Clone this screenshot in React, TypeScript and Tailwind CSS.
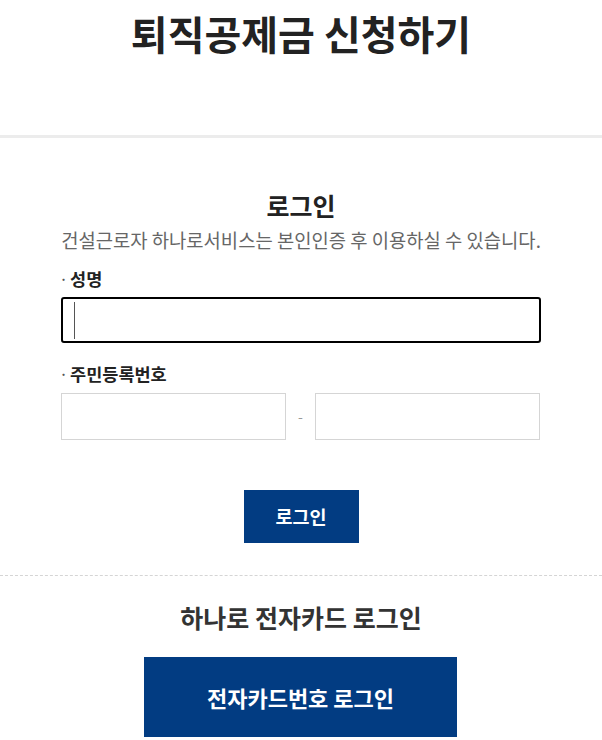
const App = () => {
  return (
    <div
      className="min-h-[740px] bg-white text-[#222]"
      style={{ fontFamily: '"Noto Sans CJK KR", "Noto Sans", sans-serif' }}
    >
      <div className="h-[138px] border-b-[3px] border-[#ececec] pt-[5px]">
        <h1 className="text-center text-[40px] font-bold leading-[56px] text-[#222]">
          퇴직공제금 신청하기
        </h1>
      </div>

      <div className="mx-auto w-[480px] pt-[50px]">
        <h2 className="text-center text-[25px] font-bold leading-[34px]">로그인</h2>
        <p className="mt-[5px] text-center text-[18.8px] leading-[26px] text-[#666]">
          건설근로자 하나로서비스는 본인인증 후 이용하실 수 있습니다.
        </p>

        <label className="mt-[14px] flex items-center text-[17.5px] font-bold leading-[24px]">
          <span className="-ml-[1px] mr-[3px] text-[12px] text-[#555]">·</span>성명
        </label>
        {/* focused field with caret */}
        <div className="relative mt-[6px]">
          <input
            type="text"
            className="block h-[46px] w-full rounded-[3px] border-2 border-black px-3 outline-none"
          />
          <span className="absolute left-[13px] top-[5px] h-[37px] w-px bg-[#555]" />
        </div>

        <label className="mt-[19px] flex items-center text-[17.5px] font-bold leading-[24px]">
          <span className="-ml-[1px] mr-[3px] text-[12px] text-[#555]">·</span>주민등록번호
        </label>
        <div className="mt-[7px] flex items-center pr-[1px]">
          <input
            type="text"
            className="block h-[47px] w-[225px] border border-[#d5d5d5] px-3 outline-none"
          />
          <span className="flex-1 text-center text-[14px] text-[#999]">-</span>
          <input
            type="text"
            className="block h-[47px] w-[225px] border border-[#d5d5d5] px-3 outline-none"
          />
        </div>

        <div className="mt-[50px] flex justify-center">
          <button className="h-[53px] w-[115px] bg-[#023c82] text-[18.5px] font-bold text-white">
            로그인
          </button>
        </div>
      </div>

      <div className="mt-[32px] border-t border-dashed border-[#d5d5d5] pt-[24px]">
        <h2 className="text-center text-[25px] font-bold leading-[34px] text-[#333]">
          하나로 전자카드 로그인
        </h2>
        <div className="mt-[23px] flex justify-center pr-[1px]">
          <button className="h-[80px] w-[313px] bg-[#023c82] text-[22px] font-bold text-white">
            전자카드번호 로그인
          </button>
        </div>
      </div>
    </div>
  );
};

export default App;
